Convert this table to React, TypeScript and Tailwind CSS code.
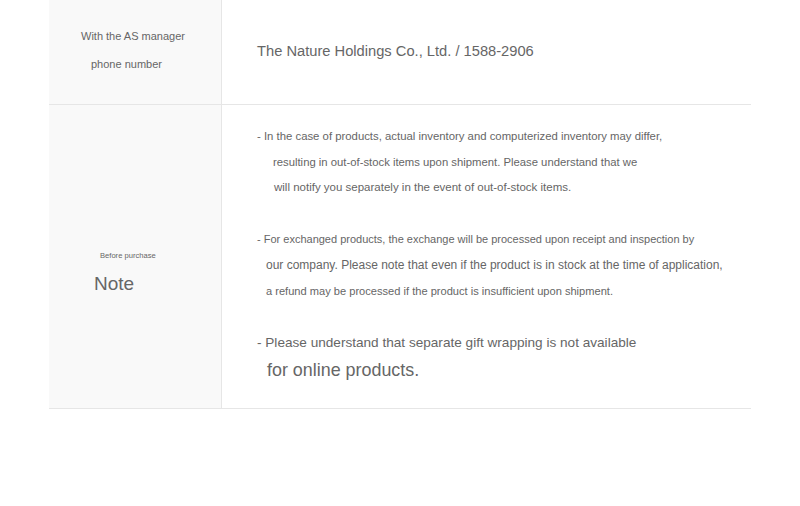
import React from "react";

const font = { fontFamily: '"Liberation Sans", Arial, sans-serif' };

export default function App() {
  return (
    <div className="w-[800px] h-[506px] bg-white text-[#666666]" style={font}>
      <div className="ml-[49px] w-[702px]">
        {/* Row 1 */}
        <div className="flex h-[105px] border-b border-[#e6e6e6]">
          <div className="w-[173px] shrink-0 bg-[#f9f9f9] border-r border-[#e6e6e6] pt-[27px]">
            <div className="pl-[32px] text-[11px] leading-[18px]">With the AS manager</div>
            <div className="pl-[42px] text-[11px] leading-[18px] mt-[10px]">phone number</div>
          </div>
          <div className="flex-1 pl-[35px] pt-[41px]">
            <div className="text-[14.7px] leading-[20px] whitespace-nowrap">The Nature Holdings Co., Ltd. / 1588-2906</div>
          </div>
        </div>
        {/* Row 2 */}
        <div className="flex h-[304px] border-b border-[#e6e6e6]">
          <div className="w-[173px] shrink-0 bg-[#f9f9f9] border-r border-[#e6e6e6] pt-[143px]">
            <div className="pl-[51px] text-[7.6px] leading-[16px] whitespace-nowrap">Before purchase</div>
            <div className="pl-[45px] text-[19px] leading-[28px] mt-[6px]">Note</div>
          </div>
          <div className="flex-1 pl-[35px] pt-[18px]">
            <div className="text-[11.35px] leading-[26px] whitespace-nowrap">- In the case of products, actual inventory and computerized inventory may differ,</div>
            <div className="pl-[16px] text-[11.3px] leading-[26px] whitespace-nowrap">resulting in out-of-stock items upon shipment. Please understand that we</div>
            <div className="pl-[17px] text-[11.5px] leading-[25px] whitespace-nowrap">will notify you separately in the event of out-of-stock items.</div>
            <div className="mt-[26px] text-[11px] leading-[26px] whitespace-nowrap">- For exchanged products, the exchange will be processed upon receipt and inspection by</div>
            <div className="pl-[9px] text-[12px] leading-[27px] whitespace-nowrap">our company. Please note that even if the product is in stock at the time of application,</div>
            <div className="pl-[9px] text-[11.1px] leading-[25px] whitespace-nowrap">a refund may be processed if the product is insufficient upon shipment.</div>
            <div className="mt-[26px] text-[13.6px] leading-[26px] whitespace-nowrap">- Please understand that separate gift wrapping is not available</div>
            <div className="pl-[10px] text-[17.9px] leading-[28px] whitespace-nowrap">for online products.</div>
          </div>
        </div>
      </div>
    </div>
  );
}
